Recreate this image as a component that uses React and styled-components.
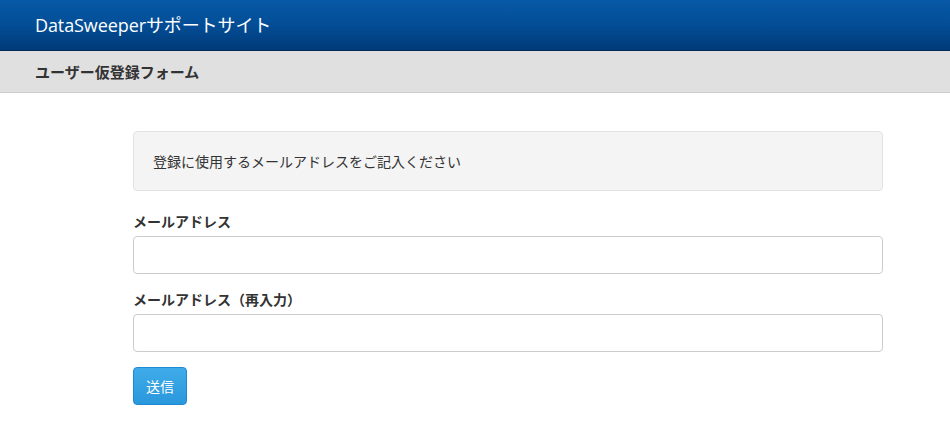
import React from 'react';
import styled, { createGlobalStyle } from 'styled-components';

const GlobalStyle = createGlobalStyle`
  html, body {
    margin: 0;
    padding: 0;
    background: #fff;
  }
  body {
    font-family: "Open Sans", "Noto Sans CJK JP", sans-serif;
    font-size: 14px;
    color: #333;
  }
  * { box-sizing: border-box; }
`;

const Header = styled.header`
  height: 51px;
  display: flex;
  align-items: center;
  padding: 0 35px;
  background: linear-gradient(to bottom, #0759a6 0%, #034d96 50%, #013a78 100%);
  border-bottom: 1px solid #012a58;
`;

const Brand = styled.h1`
  margin: 0;
  color: #fff;
  font-size: 18px;
  font-weight: 400;
  letter-spacing: -0.1px;
  padding-bottom: 2px;
`;

const SubHeader = styled.div`
  height: 42px;
  display: flex;
  align-items: center;
  padding: 0 35px;
  background: #e0e0e0;
  border-bottom: 1px solid #cdcdcd;
`;

const PageTitle = styled.h2`
  margin: 0;
  font-size: 15px;
  font-weight: 700;
  color: #333;
`;

const Container = styled.main`
  width: 750px;
  margin: 38px 0 0 133px;
`;

const Notice = styled.div`
  height: 60px;
  display: flex;
  align-items: center;
  padding: 0 19px;
  background: #f4f4f4;
  border: 1px solid #e3e3e3;
  border-radius: 4px;
  font-size: 14px;
  color: #333;
  margin-bottom: 21px;
`;

const Field = styled.div`
  display: flex;
  flex-direction: column;
  margin-bottom: 16px;
`;

const Label = styled.label`
  font-weight: 700;
  font-size: 14px;
  line-height: 20px;
  margin-bottom: 4px;
`;

const Input = styled.input`
  height: 38px;
  width: 100%;
  border: 1px solid #cccccc;
  border-radius: 4px;
  padding: 6px 12px;
  font-size: 14px;
  font-family: inherit;
  outline: none;
`;

const Button = styled.button`
  height: 38px;
  margin-top: -1px;
  padding: 0 12px;
  border: 1px solid #1e88d0;
  border-radius: 4px;
  background: linear-gradient(to bottom, #3fabe9 0%, #2a98dc 100%);
  color: #fff;
  font-size: 14px;
  font-family: inherit;
  cursor: pointer;
`;

export default function App() {
  return (
    <>
      <GlobalStyle />
      <Header>
        <Brand>DataSweeperサポートサイト</Brand>
      </Header>
      <SubHeader>
        <PageTitle>ユーザー仮登録フォーム</PageTitle>
      </SubHeader>
      <Container>
        <Notice>登録に使用するメールアドレスをご記入ください</Notice>
        <Field>
          <Label htmlFor="email">メールアドレス</Label>
          <Input id="email" type="email" />
        </Field>
        <Field>
          <Label htmlFor="email2">メールアドレス（再入力）</Label>
          <Input id="email2" type="email" />
        </Field>
        <Button type="submit">送信</Button>
      </Container>
    </>
  );
}
